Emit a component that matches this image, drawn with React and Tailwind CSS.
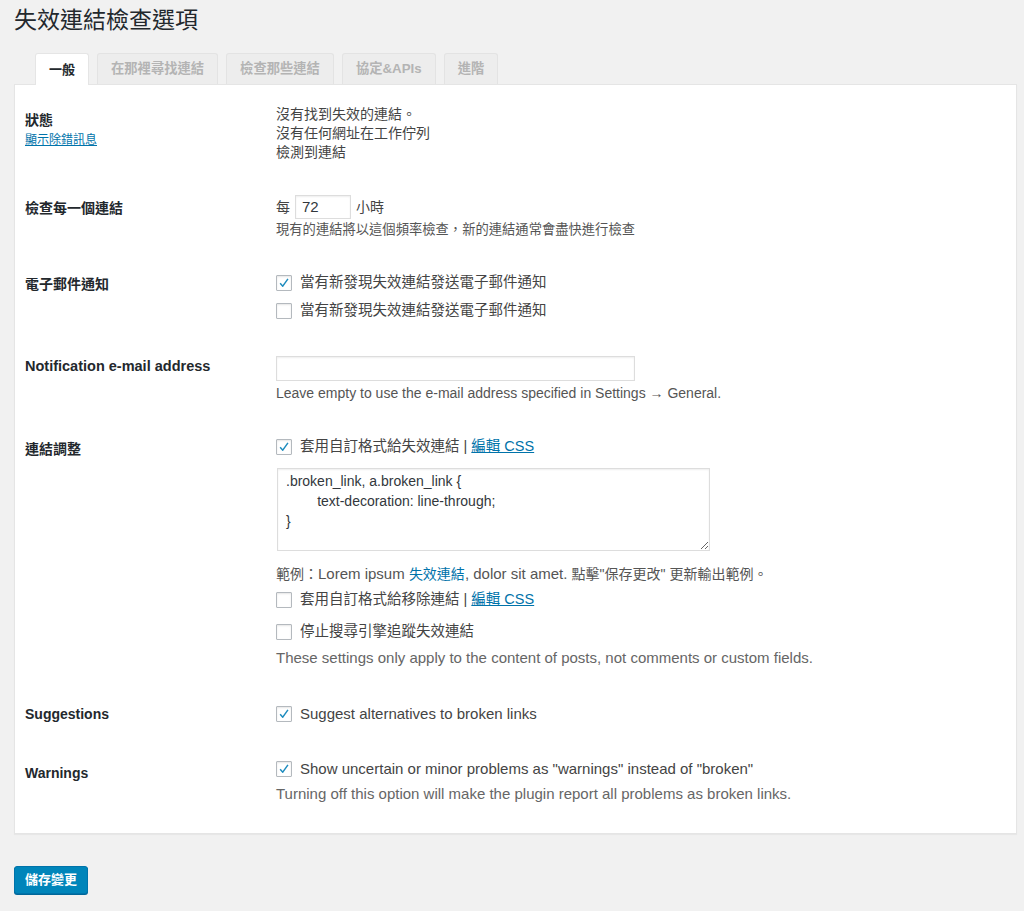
import React from "react";

const font = "font-['Liberation_Sans','Noto_Sans_CJK_TC',sans-serif]";

function Checkbox({ checked }) {
  return (
    <span className="w-4 h-4 shrink-0 flex items-center justify-center bg-white border border-[#b4b9be] rounded-[1px] shadow-[inset_0_1px_2px_rgba(0,0,0,0.1)]">
      {checked && (
        <svg viewBox="0 0 16 16" className="w-[14px] h-[14px]">
          <path d="M3.6 8.3 L6.6 11.6 L12.5 3.3" fill="none" stroke="#1e8cbe" strokeWidth="1.7" strokeLinejoin="round" />
        </svg>
      )}
    </span>
  );
}

function CheckLine({ checked, children, className = "", size = "text-[14.5px]" }) {
  return (
    <div className={`h-[28px] flex items-center gap-[8px] ${size} text-[#444] ${className}`}>
      <Checkbox checked={checked} />
      <span>{children}</span>
    </div>
  );
}

function Row({ label, labelTop, className = "", children }) {
  return (
    <div className={`flex items-start ${className}`}>
      <div className={`w-[251px] shrink-0 ${labelTop}`}>{label}</div>
      <div className="flex-1">{children}</div>
    </div>
  );
}

const Label = ({ children, size = "text-[14px]" }) => (
  <div className={`${size} leading-[20px] font-bold text-[#23282d]`}>{children}</div>
);

const tabs = ["一般", "在那裡尋找連結", "檢查那些連結", "協定&APIs", "進階"];

export default function App() {
  return (
    <div className={`min-h-screen bg-[#f1f1f1] ${font} pb-[20px]`}>
      <h1 className="pl-[14px] pt-[6px] text-[23px] leading-[29px] text-[#23282d]">失效連結檢查選項</h1>

      <div className="flex gap-[8px] pl-[35px] mt-[18px] relative z-10 -mb-px">
        {tabs.map((t, i) => (
          <div
            key={t}
            className={
              i === 0
                ? "h-[32px] px-[13px] flex items-center text-[13px] font-bold text-[#23282d] bg-white border border-b-0 border-[#e5e5e5] rounded-t-[3px]"
                : "h-[31px] mb-px px-[13px] flex items-center text-[13.3px] font-bold text-[#b4b4b4] bg-[#ededed] border border-b-0 border-[#e3e3e3] rounded-t-[3px]"
            }
          >
            {t}
          </div>
        ))}
      </div>

      <div className="ml-[14px] w-[1003px] bg-white border border-[#e5e5e5] shadow-[0_1px_1px_rgba(0,0,0,0.04)] pl-[10px] pt-[20px] pb-[30px]">
        <Row
          labelTop="mt-[5px]"
          label={
            <>
              <Label>狀態</Label>
              <a className="block text-[12px] leading-[20px] text-[#0073aa] underline">顯示除錯訊息</a>
            </>
          }
        >
          <div className="text-[14px] leading-[19px] text-[#444]">
            <div>沒有找到失效的連結。</div>
            <div>沒有任何網址在工作佇列</div>
            <div>檢測到連結</div>
          </div>
        </Row>

        <Row className="mt-[33px]" labelTop="mt-[3px]" label={<Label>檢查每一個連結</Label>}>
          <div className="h-[24px] flex items-center text-[14px] text-[#444]">
            <span>每</span>
            <div className="ml-[5px] w-[56px] h-[24px] border border-[#ddd] shadow-[inset_0_1px_2px_rgba(0,0,0,0.07)] flex items-center pl-[6px] text-[15px] text-[#32373c]">72</div>
            <span className="ml-[5px]">小時</span>
          </div>
          <div className="mt-[1px] text-[13.3px] leading-[19px] text-[#555]">現有的連結將以這個頻率檢查，新的連結通常會盡快進行檢查</div>
        </Row>

        <Row className="mt-[30px]" labelTop="mt-[5px]" label={<Label>電子郵件通知</Label>}>
          <CheckLine checked>當有新發現失效連結發送電子郵件通知</CheckLine>
          <CheckLine>當有新發現失效連結發送電子郵件通知</CheckLine>
        </Row>

        <Row className="mt-[31px]" labelTop="mt-0" label={<Label size="text-[14.5px]">Notification e-mail address</Label>}>
          <div className="w-[359px] h-[25px] border border-[#ddd] shadow-[inset_0_1px_2px_rgba(0,0,0,0.07)]" />
          <div className="mt-[3px] h-[19px] text-[14px] leading-[19px] text-[#555]">
            Leave empty to use the e-mail address specified in Settings → General.
          </div>
        </Row>

        <Row className="mt-[30px]" labelTop="mt-[6px]" label={<Label>連結調整</Label>}>
          <CheckLine checked>
            套用自訂格式給失效連結 | <a className="text-[#0073aa] underline text-[14.5px]">編輯 CSS</a>
          </CheckLine>
          <textarea
            readOnly
            defaultValue={".broken_link, a.broken_link {\n\ttext-decoration: line-through;\n}"}
            className="block mt-[7px] ml-[1px] w-[433px] h-[83px] border border-[#ddd] shadow-[inset_0_1px_2px_rgba(0,0,0,0.07)] px-[8px] pt-[2px] text-[14px] leading-[20px] text-[#32373c] outline-none resize-y [tab-size:8]"
          />
          <div className="mt-[13px] h-[19px] text-[14px] leading-[19px] text-[#555]">
            範例：<span className="text-[15px]">Lorem ipsum </span>
            <span className="text-[#0073aa]">失效連結</span>
            <span className="text-[15px]">, dolor sit amet. </span>點擊"保存更改" 更新輸出範例。
          </div>
          <CheckLine className="mt-[3px]">
            套用自訂格式給移除連結 | <a className="text-[#0073aa] underline text-[14.5px]">編輯 CSS</a>
          </CheckLine>
          <CheckLine className="mt-[4px]">停止搜尋引擎追蹤失效連結</CheckLine>
          <div className="mt-[2px] h-[19px] text-[15px] leading-[19px] text-[#666]">
            These settings only apply to the content of posts, not comments or custom fields.
          </div>
        </Row>

        <Row className="mt-[33px]" labelTop="mt-[4px]" label={<Label>Suggestions</Label>}>
          <CheckLine checked size="text-[15px]">Suggest alternatives to broken links</CheckLine>
        </Row>

        <Row className="mt-[27px]" labelTop="mt-[8px]" label={<Label>Warnings</Label>}>
          <CheckLine checked size="text-[15px]">Show uncertain or minor problems as "warnings" instead of "broken"</CheckLine>
          <div className="mt-[1px] h-[19px] text-[15px] leading-[19px] text-[#666]">
            Turning off this option will make the plugin report all problems as broken links.
          </div>
        </Row>
      </div>

      <button className="ml-[14px] mt-[32px] h-[28px] px-[10px] bg-[#0085ba] border border-[#0073aa] rounded-[3px] shadow-[0_1px_0_#006799] text-white text-[13px] font-bold">
        儲存變更
      </button>
    </div>
  );
}
